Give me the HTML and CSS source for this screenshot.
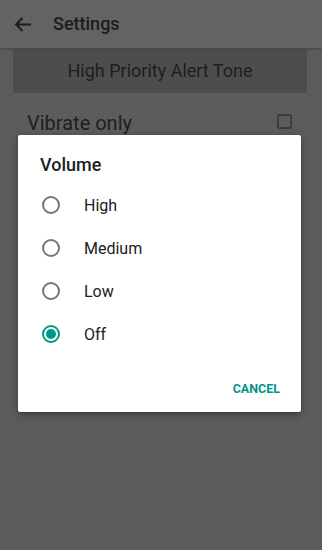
FILE: index.html
```html
<!DOCTYPE html>
<html lang="en">
<head>
<meta charset="utf-8">
<title>Settings</title>
<link rel="stylesheet" href="styles.css">
</head>
<body>
<div class="screen">
  <header class="appbar">
    <svg class="back" width="24" height="24" viewBox="0 0 24 24" aria-hidden="true">
      <path d="M4 12.5H19M10.5 6L4 12.5L10.5 19" fill="none" stroke="#1c1c1c" stroke-width="2"/>
    </svg>
    <span class="title">Settings</span>
  </header>
  <main class="content">
    <div class="tone-button">High Priority Alert Tone</div>
    <div class="setting-row">
      <span class="setting-label">Vibrate only</span>
      <span class="checkbox"></span>
    </div>
  </main>

  <div class="dialog" role="dialog">
    <div class="dialog-title">Volume</div>
    <ul class="options">
      <li class="option"><span class="radio"></span><span class="option-label">High</span></li>
      <li class="option"><span class="radio"></span><span class="option-label">Medium</span></li>
      <li class="option"><span class="radio"></span><span class="option-label">Low</span></li>
      <li class="option"><span class="radio checked"></span><span class="option-label">Off</span></li>
    </ul>
    <div class="actions">
      <span class="text-button">CANCEL</span>
    </div>
  </div>
</div>
</body>
</html>
```

FILE: styles.css
```css
* { box-sizing: border-box; }

html, body {
  margin: 0;
  padding: 0;
  background: #5c5c5c;
}

body {
  font-family: Roboto, "Liberation Sans", sans-serif;
  color: #1e1e1e;
}

.screen {
  position: relative;
  width: 322px;
  height: 550px;
  background: #5c5c5c;
  overflow: hidden;
}

.appbar {
  height: 48px;
  display: flex;
  align-items: center;
  background: #636363;
  box-shadow: 0 1px 2px rgba(0, 0, 0, 0.25);
  position: relative;
  z-index: 1;
}

.back {
  margin-left: 12px;
  margin-top: -1px;
  flex: none;
}

.title {
  margin-left: 17px;
  font-size: 18px;
  font-weight: 500;
  color: #1c1c1c;
  margin-top: -2px;
}

.content {
  padding: 1px 15px 0 13px;
}

.tone-button {
  height: 44px;
  background: #4d4d4d;
  display: flex;
  align-items: center;
  justify-content: center;
  font-size: 18px;
  color: #1e1e1e;
  padding-bottom: 1px;
}

.setting-row {
  margin-top: 18px;
  padding: 0 15px 0 14px;
  display: flex;
  align-items: center;
  justify-content: space-between;
  line-height: 24px;
}

.setting-label {
  font-size: 20px;
  color: #1e1e1e;
}

.checkbox {
  width: 15px;
  height: 15px;
  border: 2px solid #3c3c3c;
  border-radius: 2px;
  margin-bottom: 3px;
}

.dialog {
  position: absolute;
  left: 18px;
  top: 135px;
  width: 283px;
  height: 277px;
  background: #ffffff;
  border-radius: 2px;
  box-shadow: 0 3px 10px rgba(0, 0, 0, 0.3), 0 1px 3px rgba(0, 0, 0, 0.2);
  padding-top: 18px;
  display: flex;
  flex-direction: column;
}

.dialog-title {
  padding-left: 22px;
  font-size: 18px;
  font-weight: 500;
  line-height: 24px;
  color: #212121;
}

.options {
  list-style: none;
  margin: 6.5px 0 0;
  padding: 0;
}

.option {
  height: 43px;
  display: flex;
  align-items: center;
  padding-left: 24px;
}

.radio {
  width: 18px;
  height: 18px;
  border: 2px solid #757575;
  border-radius: 50%;
  flex: none;
  position: relative;
}

.radio.checked {
  border-color: #009688;
}

.radio.checked::after {
  content: "";
  position: absolute;
  left: 2px;
  top: 2px;
  width: 10px;
  height: 10px;
  border-radius: 50%;
  background: #009688;
}

.option-label {
  margin-left: 24px;
  font-size: 16px;
  color: #212121;
}

.actions {
  display: flex;
  justify-content: flex-end;
  padding: 14.5px 13px 6px;
}

.text-button {
  height: 36px;
  padding: 0 8px;
  display: flex;
  align-items: center;
  font-size: 12.5px;
  font-weight: 700;
  color: #009688;
}
```
